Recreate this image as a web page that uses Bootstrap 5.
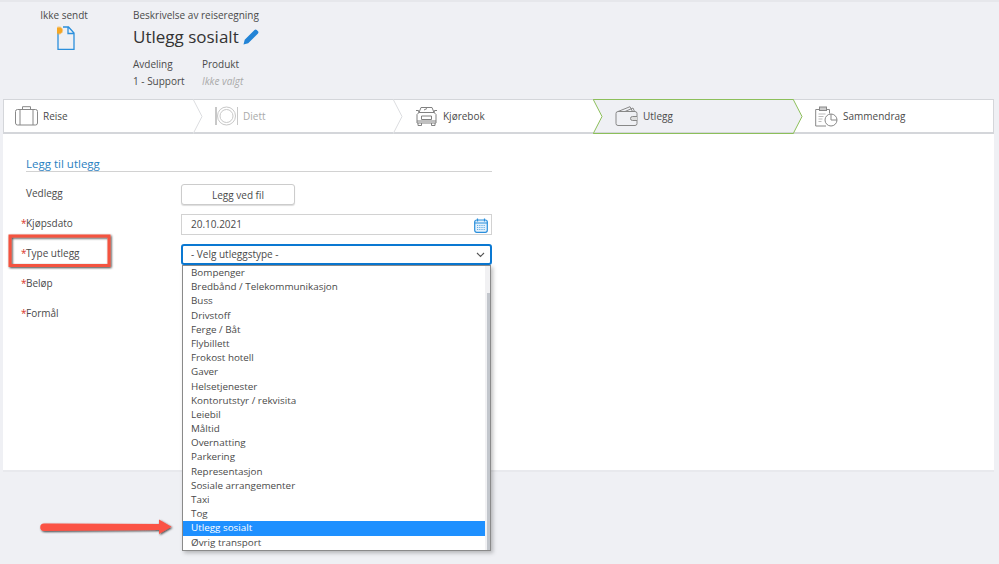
<!DOCTYPE html>
<html lang="no"><head><meta charset="utf-8"><title>Utlegg</title>
<link href="https://cdn.jsdelivr.net/npm/bootstrap@5.3.0/dist/css/bootstrap.min.css" rel="stylesheet">
<style>
html,body{height:564px;overflow:hidden}
body{background:#eff0f4;font-family:"Open Sans",sans-serif;font-size:10px;color:#4a4a4a;position:relative;line-height:14px}
.topline{height:2px;background:#e6e7eb}
.head{height:97px;padding-left:3px}
.stat-col{width:122px;padding-top:6px;text-align:center}
.stat-col svg{display:block;margin:4px 0 0 54px}
.info-col{padding-top:6px;margin-left:8px}
.title-line{font-size:17px;line-height:24px;color:#333;margin-top:3px;margin-bottom:8px}
.meta-a{width:69px}
.meta-v{margin-top:3px}
.muted-it{font-style:italic;color:#aaa}
.stepper{height:35px;margin-left:3px;margin-right:5px;background:#fff;border:1px solid #d4d6da;border-bottom:2px solid #d4d6da}
.step{width:200px;height:100%;position:relative;padding-left:22px;gap:5px}
.step:first-child{width:189px;padding-left:11px}
.step:last-child{flex:1}
.step.cur{background:#eff0f4}
.step.cur:before{content:"";position:absolute;left:0;right:0;top:-1px;bottom:-2px;border-top:1px solid #8cbf5a;border-bottom:1px solid #8cbf5a;pointer-events:none}
.chev{position:absolute;right:-10px;top:-1px;width:10px;height:35px;z-index:2}
.dis{color:#aaa}
.panel{margin:0 5px 0 3px;height:338px;background:#fff;padding:22px 0 0 23px;border-bottom:2px solid #e8e9ed;position:relative}
.form-wrap{width:466px}
.sec-title{color:#2a7fc1;font-size:11.5px;line-height:15px;border-bottom:1px solid #d2d2d2;margin-bottom:12px}
.frow{height:30px;position:relative}
.lbl{width:155px;padding-top:2px}
.req{color:#d9342b;position:absolute;left:-5px}
.btn-file{width:114px;height:21px;padding:0;font-size:10px;line-height:18px;border:1px solid #ccc;border-radius:3px;background:#fff;color:#4a4a4a;box-shadow:0 1px 1px #ddd}
.ctl{width:311px;height:21px;border:1px solid #d2d2d2;padding:0 9px;font-size:10px;line-height:19px;position:relative;color:#4a4a4a}
.ctl.sel{border:2px solid #0a78d2;border-radius:3px;line-height:17px;padding:0 8px}
.ctl svg{position:absolute;right:3px;top:2.500px}
.ctl.sel svg{right:5px;top:6px}
.dd{position:absolute;left:182px;top:265px;width:309px;height:285.500px;background:#fff;border:1px solid #8a8a8a;box-shadow:2px 2px 4px rgba(0,0,0,.25);z-index:5;padding-right:5px}
.dd-item{height:14.200px;line-height:13px;padding-left:8px;color:#4a4a4a;font-size:9.850px}
.dd-item.on{background:#1e90ff;color:#fff}
.sb-track{position:absolute;right:0;top:0;bottom:0;width:5px;background:#f1f1f3}
.sb-thumb{position:absolute;right:0;top:27px;bottom:0;width:3.500px;background:#c2c6cc}
.anno{position:absolute;left:0;top:0;z-index:6;pointer-events:none}
</style></head><body>
<div class="topline"></div>
<div class="head d-flex">
 <div class="stat-col">Ikke sendt
  <svg width="18" height="24" viewBox="0 0 18 24"><path d="M1 7V23.500H17V7L11.500 1H6M11 1V7.500H17" fill="none" stroke="#2b8fdc" stroke-width="1.300"/><circle cx="2" cy="4.500" r="3.200" fill="#f5a623"/><circle cx="2" cy="4.500" r="3.600" fill="none" stroke="#f5a623" stroke-width="1" stroke-dasharray="1 1"/></svg>
 </div>
 <div class="info-col">
  <div>Beskrivelse av reiseregning</div>
  <div class="title-line d-flex align-items-center gap-1">Utlegg sosialt
   <svg width="16" height="16" viewBox="0 0 16 16"><path d="M.5 15.500l1.200-4.700L11.500 1c.8-.7 1.500-.7 2.200 0l1.300 1.300c.6.7.6 1.400 0 2.100L5.200 14.300z" fill="#2384d6"/></svg></div>
  <div class="d-flex"><div class="meta-a">Avdeling<div class="meta-v">1 - Support</div></div><div>Produkt<div class="meta-v muted-it">Ikke valgt</div></div></div>
 </div>
</div>
<div class="stepper d-flex">
 <div class="step d-flex align-items-center"><svg width="23" height="20" viewBox="0 0 23 20" fill="none" stroke="#888"><rect x=".5" y="3.500" width="22" height="15.500" rx="2"/><path d="M5 3.500v15.500M18 3.500v15.500M7.500 3.500V.7h8v2.800"/></svg>Reise
  <svg class="chev" viewBox="0 0 10 35"><path d="M0 0l9 17.500L0 35" fill="#fff" stroke="#dcdde0"/></svg></div>
 <div class="step d-flex align-items-center dis"><svg width="23" height="20" viewBox="0 0 23 20" fill="none" stroke="#c8c8c8"><circle cx="11.500" cy="10" r="9"/><circle cx="11.500" cy="10" r="6.500"/><path d="M1 1v18" stroke-width="2"/><path d="M22.500 1v18"/></svg>Diett
  <svg class="chev" viewBox="0 0 10 35"><path d="M0 0l9 17.500L0 35" fill="#fff" stroke="#dcdde0"/></svg></div>
 <div class="step d-flex align-items-center"><svg width="23" height="20" viewBox="0 0 23 20" fill="none" stroke="#808080"><path d="M4 6.500L6 1.500h11l2 5M1 4.500h2.500l.5 2.500M22 4.500h-2.500l-.5 2.500M2 8.500L4 6.500h15l2 2v8.500H2zM3 17v2.500h3.500V17M16.500 17v2.500H20V17M6.500 10h10v3.500h-10zM2 15h19M9 4l3-1.500"/></svg>Kjørebok
  <svg class="chev" viewBox="0 0 10 35"><path d="M0 0l9 17.500L0 35" fill="#fff" stroke="#8cbf5a"/></svg></div>
 <div class="step cur d-flex align-items-center"><svg width="23" height="20" viewBox="0 0 23 20" fill="none" stroke="#888"><rect x="1" y="5.500" width="21" height="14" rx="2"/><path d="M3 5.500L15 .7l2.500 4.800M10 5.500l8-3.500 1.500 3.500" /><path d="M22 10.500h-4.500a2 2 0 000 4H22" fill="#ddd"/></svg>Utlegg
  <svg class="chev" viewBox="0 0 10 35"><path d="M0 0l9 17.500L0 35" fill="#eff0f4" stroke="#8cbf5a"/></svg></div>
 <div class="step d-flex align-items-center"><svg width="23" height="21" viewBox="0 0 23 21" fill="none" stroke="#888"><path d="M12 3.500h2.500v4M4 3.500H.7V20H11"/><rect x="4.500" y="1" width="7" height="3.500" fill="#ccc"/><path d="M3.500 8h7M3.500 10.500h5M3.500 13h4M3.500 15.500h3" stroke="#bbb"/><circle cx="16" cy="14" r="6"/><path d="M16 8v6h6"/></svg>Sammendrag</div>
</div>
<div class="panel">
 <div class="form-wrap">
  <div class="sec-title">Legg til utlegg</div>
  <div class="frow d-flex"><div class="lbl">Vedlegg</div><button class="btn-file" type="button">Legg ved fil</button></div>
  <div class="frow d-flex"><div class="lbl"><span class="req">*</span>Kjøpsdato</div><div class="ctl">20.10.2021
    <svg width="14" height="15" viewBox="0 0 14 15" fill="#e3f1fc" stroke="#2b8fdc"><rect x=".7" y="2" width="12.600" height="12.300" rx="2" stroke-width="1.200"/><path d="M.7 5h12.600M3.500.5v3M10.500.5v3" stroke-width="1.200" fill="none"/><path d="M3 7.500h8M3 9.500h8M3 11.500h8" stroke-dasharray="1.200 1" opacity=".7" fill="none"/></svg></div></div>
  <div class="frow d-flex"><div class="lbl"><span class="req">*</span>Type utlegg</div><div class="ctl sel">- Velg utleggstype -
    <svg width="9" height="6" viewBox="0 0 9 6" fill="none" stroke="#555" stroke-width="1.100"><path d="M1 1l3.500 3.500L8 1"/></svg></div></div>
  <div class="frow d-flex"><div class="lbl"><span class="req">*</span>Beløp</div></div>
  <div class="frow d-flex"><div class="lbl"><span class="req">*</span>Formål</div></div>
 </div>
</div>
<div class="dd">
 <div class="dd-item">Bompenger</div><div class="dd-item">Bredbånd / Telekommunikasjon</div><div class="dd-item">Buss</div><div class="dd-item">Drivstoff</div><div class="dd-item">Ferge / Båt</div><div class="dd-item">Flybillett</div><div class="dd-item">Frokost hotell</div><div class="dd-item">Gaver</div><div class="dd-item">Helsetjenester</div><div class="dd-item">Kontorutstyr / rekvisita</div><div class="dd-item">Leiebil</div><div class="dd-item">Måltid</div><div class="dd-item">Overnatting</div><div class="dd-item">Parkering</div><div class="dd-item">Representasjon</div><div class="dd-item">Sosiale arrangementer</div><div class="dd-item">Taxi</div><div class="dd-item">Tog</div><div class="dd-item on">Utlegg sosialt</div><div class="dd-item">Øvrig transport</div>
 <div class="sb-track"></div><div class="sb-thumb"></div>
</div>
<svg class="anno" width="999" height="564" viewBox="0 0 999 564">
 <defs><filter id="sh" x="-10%" y="-40%" width="120%" height="190%"><feDropShadow dx="1" dy="1" stdDeviation=".8" flood-color="#000" flood-opacity=".75"/></filter></defs>
 <rect x="10" y="236" width="99" height="29.500" fill="none" stroke="#f4523f" stroke-width="3" filter="url(#sh)"/>
 <path d="M44 523.500L159 524V519.500L171.500 526.700L159 534V530L44 531a3.750 3.750 0 010-7.500Z" fill="#fb5245" filter="url(#sh)"/>
</svg>
</body></html>
